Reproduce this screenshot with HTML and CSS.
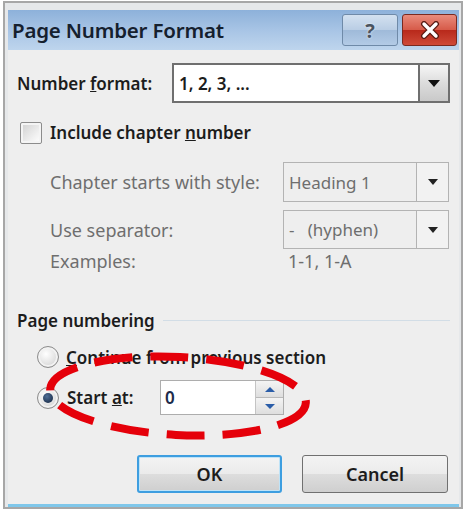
FILE: index.html
```html
<!DOCTYPE html>
<html lang="en">
<head>
    <meta charset="UTF-8">
    <title>Page Number Format</title>
    <link rel="stylesheet" href="styles.css">
</head>
<body>
    <div class="window">
        <div class="titlebar">
            <span class="title">Page Number Format</span>
            <div class="caption-buttons">
                <span class="cap-btn help">?</span>
                <span class="cap-btn close">
                    <svg width="22" height="18" viewBox="0 0 22 18">
                        <path d="M5 3 L17 15 M17 3 L5 15" stroke="#5a1a12" stroke-width="6" stroke-linecap="round"/>
                        <path d="M5 3 L17 15 M17 3 L5 15" stroke="#ffffff" stroke-width="3.4" stroke-linecap="round"/>
                    </svg>
                </span>
            </div>
        </div>

        <div class="client">
            <div class="format-row">
                <label class="strong">Number <u>f</u>ormat:</label>
                <div class="combo">
                    <span class="combo-text strong">1, 2, 3, ...</span>
                    <span class="combo-btn"><i class="arrow"></i></span>
                </div>
            </div>

            <div class="check-row">
                <span class="checkbox"></span>
                <span class="strong">Include chapter <u>n</u>umber</span>
            </div>

            <div class="chapter-row first">
                <span class="dim">Chapter starts with style:</span>
                <div class="combo disabled">
                    <span class="combo-text">Heading 1</span>
                    <span class="combo-btn"><i class="arrow"></i></span>
                </div>
            </div>
            <div class="chapter-row second">
                <span class="dim">Use separator:</span>
                <div class="combo disabled">
                    <span class="combo-text">-&nbsp;&nbsp;&nbsp;(hyphen)</span>
                    <span class="combo-btn"><i class="arrow"></i></span>
                </div>
            </div>
            <div class="chapter-row examples">
                <span class="dim">Examples:</span>
                <span class="dim example-value">1-1, 1-A</span>
            </div>

            <div class="group-head">
                <span class="strong">Page numbering</span>
                <span class="rule"></span>
            </div>

            <div class="radio-row">
                <span class="radio"></span>
                <span class="strong"><u>C</u>ontinue from previous section</span>
            </div>
            <div class="radio-row start-row">
                <span class="radio checked"></span>
                <span class="strong start-label">Start <u>a</u>t:</span>
                <div class="spin">
                    <span class="spin-value">0</span>
                    <span class="spin-btns">
                        <span class="spin-btn"><i class="tri up"></i></span>
                        <span class="spin-btn"><i class="tri down"></i></span>
                    </span>
                </div>
            </div>

            <div class="buttons">
                <button class="btn default">OK</button>
                <button class="btn">Cancel</button>
            </div>

            <!-- red marker drawn over the dialog -->
            <svg class="highlight" width="451" height="457" viewBox="0 0 451 457">
                <ellipse cx="170" cy="346" rx="128" ry="39" transform="rotate(3 170 346)"
                         fill="none" stroke="#e5000a" stroke-width="8" stroke-dasharray="38 18"/>
            </svg>
        </div>
    </div>
</body>
</html>
```

FILE: styles.css
```css
body {
    margin: 0;
    background-color: #ffffff;
    font-family: "Noto Sans", "Open Sans", Arial, sans-serif;
    font-size: 17px;
}

.window {
    width: 460px;
    box-sizing: border-box;
    margin: 1px 0 0 3px;
    padding: 7px 2px 0 3px;
    border: 2px solid #a7a7a7;
    background-color: #e6e8ea;
}

/* title bar */
.titlebar {
    height: 40px;
    display: flex;
    align-items: center;
    justify-content: space-between;
    padding-left: 4px;
    background: linear-gradient(#8db1da, #aac6e6 55%, #bed5ed);
}

.title {
    font-size: 20.5px;
    font-weight: 600;
    color: #15202e;
    letter-spacing: -0.2px;
}

.caption-buttons {
    display: flex;
    gap: 4px;
    padding-right: 2px;
    align-self: center;
}

.cap-btn {
    height: 32px;
    box-sizing: border-box;
    border: 1px solid #6f8aa8;
    border-radius: 3px;
    display: flex;
    align-items: center;
    justify-content: center;
}

.cap-btn.help {
    width: 56px;
    background: linear-gradient(#d3e1f0, #b9cde4 50%, #9fbad9 51%, #b3cbe6);
    font-weight: 700;
    font-size: 20px;
    color: #4a5460;
    text-shadow: 0 0 2px #ffffff;
}

.cap-btn.close {
    width: 55px;
    border-color: #7a2a20;
    background: linear-gradient(#e98b7c, #d65a48 50%, #b8291b 51%, #cf4a38);
}

/* client area */
.client {
    position: relative;
    height: 457px;
    box-sizing: border-box;
    padding: 13px 9px 14px 9px;
    background-color: #eeeeee;
    border-bottom: 3px solid #7fc7ea;
    color: #1c1c1c;
}

.strong {
    font-weight: 600;
    color: #1c1c1c;
}

.dim {
    font-size: 18px;
    color: #6e6e6e;
}

.format-row {
    display: grid;
    grid-template-columns: 155px 278px;
    align-items: center;
    height: 40px;
}

.combo {
    height: 100%;
    box-sizing: border-box;
    display: flex;
    align-items: stretch;
    border: 2px solid #6f6f6f;
    background-color: #ffffff;
}

.combo-text {
    flex: 1;
    display: flex;
    align-items: center;
    padding-left: 5px;
}

.combo-btn {
    width: 28px;
    border-left: 2px solid #6f6f6f;
    background: linear-gradient(#f6f6f6, #dcdcdc 50%, #c9c9c9);
    display: flex;
    align-items: center;
    justify-content: center;
}

.arrow {
    width: 0;
    height: 0;
    border-left: 6px solid transparent;
    border-right: 6px solid transparent;
    border-top: 7px solid #111111;
}

.combo.disabled {
    border: 1px solid #b3b3b3;
    background-color: #eeeeee;
    color: #6e6e6e;
}

.combo.disabled .combo-btn {
    width: 31px;
    border-left: 1px solid #b3b3b3;
    background: #f2f2f2;
}

.combo.disabled .arrow {
    border-left-width: 5px;
    border-right-width: 5px;
    border-top-width: 6px;
    border-top-color: #222222;
}

.check-row {
    margin-top: 18px;
    height: 23px;
    display: flex;
    align-items: center;
    padding-left: 3px;
    gap: 8px;
}

.checkbox {
    width: 22px;
    height: 22px;
    box-sizing: border-box;
    border: 1px solid #8c8c8c;
    border-radius: 2px;
    background: linear-gradient(135deg, #cfcfcf, #f2f2f2 70%, #ffffff);
    box-shadow: inset 0 0 0 2px #f4f4f4;
}

.chapter-row {
    display: grid;
    grid-template-columns: 233px 166px;
    align-items: center;
    padding-left: 33px;
}

.chapter-row.first {
    margin-top: 18px;
    height: 40px;
}

.chapter-row.second {
    margin-top: 8px;
    height: 39px;
}

.chapter-row.examples {
    height: 20px;
}

.example-value {
    padding-left: 5px;
}

.group-head {
    margin-top: 41px;
    height: 20px;
    display: flex;
    align-items: center;
    gap: 8px;
}

.group-head .rule {
    flex: 1;
    height: 1px;
    background-color: #d2dde6;
}

.radio-row {
    display: flex;
    align-items: center;
    padding-left: 20px;
    gap: 7px;
    margin-top: 16px;
    height: 22px;
}

.radio-row.start-row {
    margin-top: 12px;
    height: 35px;
    gap: 8px;
}

.radio {
    width: 22px;
    height: 22px;
    box-sizing: border-box;
    border: 1px solid #8c8c8c;
    border-radius: 50%;
    background: radial-gradient(circle at 40% 35%, #ffffff, #e2e2e2 55%, #c4c4c4);
    box-shadow: inset 0 0 0 2px #f2f2f2;
    display: flex;
    align-items: center;
    justify-content: center;
}

.radio.checked::after {
    content: "";
    width: 10px;
    height: 10px;
    border-radius: 50%;
    background: radial-gradient(circle at 40% 35%, #4f6e96, #10203a);
}

.start-label {
    width: 85px;
}

.spin {
    height: 35px;
    display: flex;
    box-sizing: border-box;
    border: 1px solid #adadad;
}

.spin-value {
    width: 90px;
    background-color: #ffffff;
    display: flex;
    align-items: center;
    padding-left: 4px;
    font-weight: 600;
    color: #1d2b4a;
}

.spin-btns {
    width: 27px;
    display: flex;
    flex-direction: column;
    border-left: 1px solid #c4c4c4;
}

.spin-btn {
    flex: 1;
    display: flex;
    align-items: center;
    justify-content: center;
    background: linear-gradient(#f4f4f4, #dedede);
}

.spin-btn + .spin-btn {
    border-top: 1px solid #b9b9b9;
}

.tri {
    width: 0;
    height: 0;
    border-left: 5px solid transparent;
    border-right: 5px solid transparent;
}

.tri.up {
    border-bottom: 5px solid #2a5da8;
}

.tri.down {
    border-top: 5px solid #2a5da8;
}

.buttons {
    margin-top: 40px;
    display: flex;
    justify-content: flex-end;
    gap: 20px;
    padding-right: 2px;
}

.btn {
    width: 146px;
    height: 38px;
    font-family: inherit;
    font-size: 18px;
    font-weight: 600;
    color: #1c1c1c;
    border: 1px solid #707070;
    border-radius: 3px;
    background: linear-gradient(#f3f3f3, #ebebeb 50%, #dddddd 51%, #cfcfcf);
}

.btn.default {
    width: 145px;
    border: 2px solid #3d9ee0;
    box-shadow: inset 0 0 0 1px #bfe3f7;
}

.highlight {
    position: absolute;
    left: 0;
    top: 0;
    pointer-events: none;
}
```
